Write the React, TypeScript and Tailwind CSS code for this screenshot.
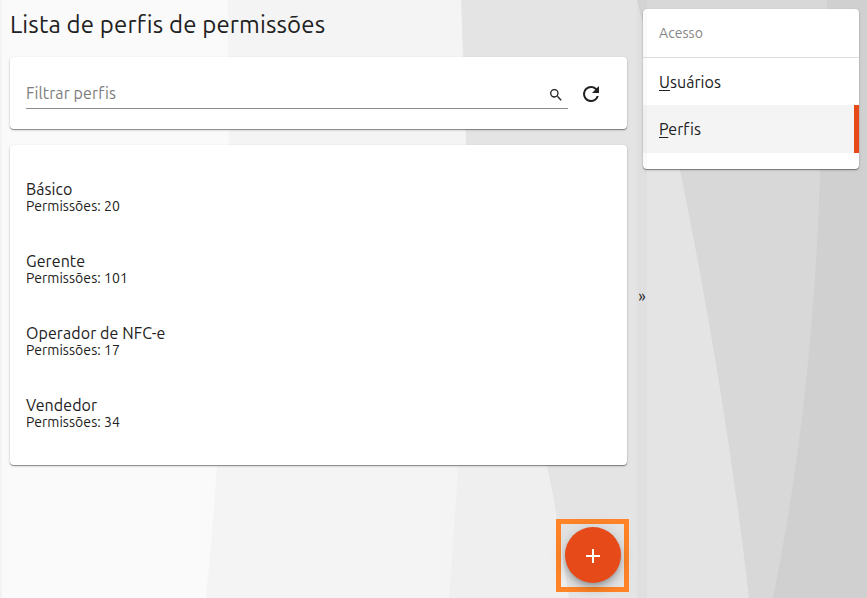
import type { ReactNode } from "react";

const profiles = [
  { name: "Básico", count: 20 },
  { name: "Gerente", count: 101 },
  { name: "Operador de NFC-e", count: 17 },
  { name: "Vendedor", count: 34 },
];

function Backdrop() {
  return (
    <svg className="absolute inset-0 -z-10" width="867" height="598" viewBox="0 0 867 598">
      <rect width="867" height="598" fill="#d0d0d0" />
      <path d="M0 0H827Q824 90 820 175Q813 400 773 598H0Z" fill="#d8d8d8" />
      <path d="M0 0H637L680 170Q725 390 749 598H0Z" fill="#e4e4e4" />
      <path d="M0 0H461L466 145L547 466L554 500L569 598H0Z" fill="#efefef" />
      <path d="M0 0H461Q463 70 466 145Q468 360 449 598H0Z" fill="#f4f4f4" />
      <path d="M0 0H227.500Q228 70 229 145Q229 360 206 598H0Z" fill="#fafafa" />
    </svg>
  );
}

function Card({ children, className }: { children: ReactNode; className: string }) {
  return (
    <section className={`rounded bg-white shadow-[0_1px_1px_rgba(0,0,0,0.38),0_1px_3px_rgba(0,0,0,0.16)] ${className}`}>
      {children}
    </section>
  );
}

export default function App() {
  return (
    <div className="relative isolate flex h-[598px] w-[867px] overflow-hidden font-['Ubuntu','Noto_Sans',sans-serif] text-[#212121]">
      <Backdrop />
      <main className="flex w-[637px] flex-col pl-[10px] pr-[10px] shadow-[inset_3px_0_3px_-2px_rgba(0,0,0,0.05)]">
        <h1 className="flex h-[57px] items-start pt-[9px] text-[24px] leading-[32px] tracking-[0.15px] whitespace-nowrap">Lista de perfis de permissões</h1>
        <Card className="flex h-[72px] shrink-0 items-start px-4 pt-5">
          <label className="flex h-8 w-[542px] items-center border-b border-[#8c8c8c]">
            <input className="mt-px min-w-0 flex-1 text-[16px] tracking-[0.1px] outline-none placeholder:text-[#7d7d7d]" placeholder="Filtrar perfis" />
            <svg className="mt-1 mr-1" width="16" height="16" viewBox="0 0 24 24" fill="#212121">
              <path d="M15.500 14h-.79l-.28-.27A6.500 6.500 0 1 0 13.730 14.430l.27.28v.79l5 4.990L20.490 19l-4.990-5zm-6 0a4.500 4.500 0 1 1 0-9 4.500 4.500 0 0 1 0 9z" />
            </svg>
          </label>
          <button className="ml-[11px] mt-[5px]" aria-label="Atualizar">
            <svg width="24" height="24" viewBox="0 0 24 24" fill="#212121">
              <path d="M17.650 6.350A7.958 7.958 0 0 0 12 4a8 8 0 1 0 7.730 10h-2.080A5.990 5.990 0 0 1 12 18a6 6 0 1 1 0-12c1.660 0 3.140.69 4.220 1.780L13 11h7V4l-2.350 2.350z" />
            </svg>
          </button>
        </Card>
        <Card className="mt-4 h-[320px] shrink-0 px-4 pt-4">
          {profiles.map((p) => (
            <div key={p.name} className="flex h-[72px] flex-col justify-center pt-px">
              <div className="text-[16px] leading-[17px] tracking-[0.08px]">{p.name}</div>
              <div className="text-[14px] leading-[16px] tracking-[0.05px]">Permissões: {p.count}</div>
            </div>
          ))}
        </Card>
        <div className="-mr-[2px] mt-[54px] flex size-[73px] shrink-0 items-start justify-center self-end border-[5px] border-[#ff8427] pt-[3px]">
          <button className="flex size-14 items-center justify-center rounded-full bg-[#e64a19] pt-[2px] shadow-[0_3px_5px_-1px_rgba(0,0,0,0.2),0_6px_10px_rgba(0,0,0,0.14),0_1px_18px_rgba(0,0,0,0.12)]" aria-label="Adicionar">
            <svg width="24" height="24" viewBox="0 0 24 24" fill="#fff"><path d="M19 13h-6v6h-2v-6H5v-2h6V5h2v6h6z" /></svg>
          </button>
        </div>
      </main>
      <div className="relative z-10 flex w-[10px] items-center justify-center bg-black/[0.02] text-[16px]">
        <span className="pb-[6px]">»</span>
      </div>
      <aside className="-ml-1 pt-[9px]">
        <Card className="h-[160px] w-[216px]">
          <div className="flex h-[49px] items-center border-b border-[#dedede] px-4 pt-px text-[14px] tracking-[0.05px] text-[#858585]">Acesso</div>
          <a className="block h-[47px] px-4 text-[16px] leading-[48px] tracking-[0.05px]"><u className="underline-offset-2">U</u>suários</a>
          <a className="block h-[48px] border-r-[5px] border-[#e64a19] bg-[#f4f4f4] px-4 text-[16px] leading-[49px] tracking-[0.05px]"><u className="underline-offset-2">P</u>erfis</a>
        </Card>
      </aside>
    </div>
  );
}
